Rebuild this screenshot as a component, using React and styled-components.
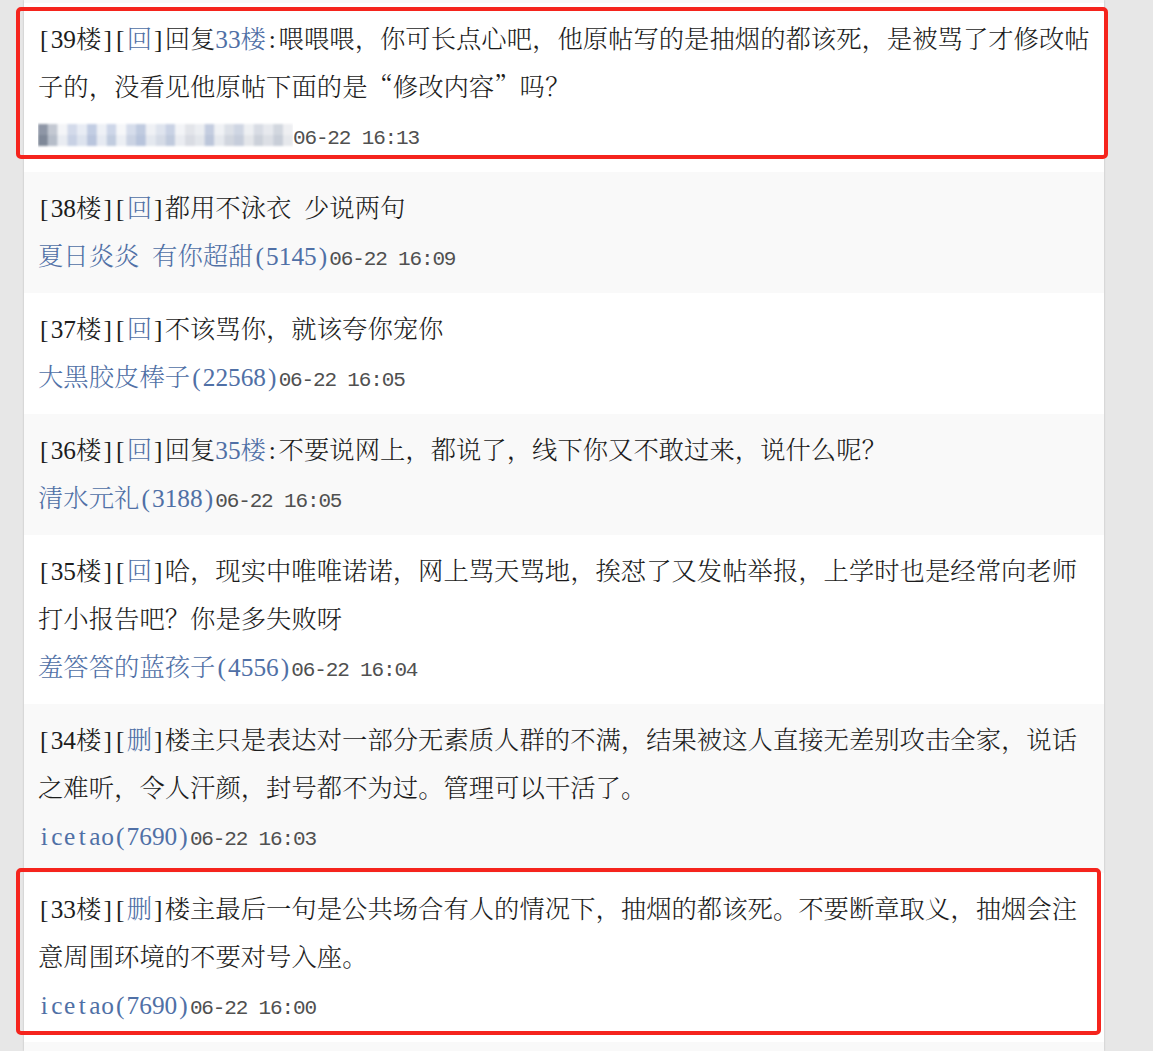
import React from "react";
import styled, { createGlobalStyle } from "styled-components";

const GlobalStyle = createGlobalStyle`
  html, body {
    margin: 0;
    padding: 0;
    background: #e7e7e7;
  }
  body {
    font-family: "Noto Serif CJK SC", "Noto Sans CJK SC", serif;
  }
`;

const Page = styled.div`
  display: flex;
  min-height: 1051px;
`;

const Panel = styled.div`
  margin-left: 24px;
  width: 1080px;
  padding-top: 3px;
  box-sizing: border-box;
  background: #f9f9f9;
  box-shadow: 0 0 2px rgba(0, 0, 0, 0.2);
`;

const Row = styled.div`
  position: relative;
  padding: 10px 8px 15px 14px;
  background: ${(p) => (p.$alt ? "#f9f9f9" : "#ffffff")};
  font-size: 25.33px;
  line-height: 48px;
  color: #1c1c1c;
  font-weight: 300;
`;

const Content = styled.div``;

const Meta = styled.div`
  height: 48px;
  color: #5070a6;
  white-space: nowrap;
`;

const Blue = styled.span`
  color: #5070a6;
`;

// SimSun style half-width cell for latin chars
const Half = styled.span`
  display: inline-block;
  width: 0.5em;
  line-height: 1;
  text-align: center;
  font-family: "Liberation Serif", serif;
  font-weight: 400;
`;

const Time = styled.span`
  font-family: "Liberation Mono", monospace;
  font-size: 21px;
  line-height: 1;
  letter-spacing: -1.15px;
  color: #505050;
`;

const Mosaic = styled.svg`
  display: inline-block;
  vertical-align: middle;
  margin-top: -4px;
`;

const Mark = styled.span`
  position: absolute;
  top: ${(p) => p.$box[0]}px;
  right: ${(p) => p.$box[1]}px;
  bottom: ${(p) => p.$box[2]}px;
  left: ${(p) => p.$box[3]}px;
  border: 4px solid #f5241d;
  border-radius: 5px;
  pointer-events: none;
  z-index: 2;
`;

const txt = (s) =>
  Array.from(s).map((ch, i) =>
    ch.charCodeAt(0) < 128 ? <Half key={i}>{ch}</Half> : ch
  );

const top = [
  "#8e96a6", "#c3c8d2", "#f4f5f8", "#d3daea", "#e8ecf4", "#c2cde3",
  "#eef1f6", "#cdd6e8", "#f6f7f9", "#d6ddeb", "#c0cbe0", "#eff1f5",
  "#dfe4ee", "#c9d2e4", "#f3f4f7", "#e3e5ea", "#eceef2", "#c4cde0",
  "#f0f2f5", "#dde1e8", "#cfd6e3", "#eef0f3", "#d8dce4", "#e7e9ee",
  "#d2d7df", "#eeeff2",
];
const bottom = [
  "#7f8898", "#b6bdc9", "#e9ecf2", "#c8d1e4", "#dde3ee", "#b9c5dd",
  "#e6eaf2", "#c1ccdf", "#eceff4", "#cbd3e3", "#b8c4dc", "#e4e8ef",
  "#d5dbe6", "#c0cadd", "#eaecf1", "#d9dce3", "#e3e6eb", "#bcc6da",
  "#e6e9ee", "#d1d6df", "#c6cddb", "#e4e6ea", "#ccd1da", "#dcdfe5",
  "#c8ced8", "#e6e8ec",
];

const Blurred = () => (
  <Mosaic width="255" height="28" viewBox="0 0 255 28">
    <defs>
      <filter id="soft" x="-5%" y="-20%" width="110%" height="140%">
        <feGaussianBlur stdDeviation="1.3" />
      </filter>
    </defs>
    <g filter="url(#soft)">
      {top.map((c, i) => (
        <rect key={i} x={i * 9.8} y="3" width="10" height="11" fill={c} />
      ))}
      {bottom.map((c, i) => (
        <rect key={"b" + i} x={i * 9.8} y="14" width="10" height="11" fill={c} />
      ))}
    </g>
  </Mosaic>
);

const floors = [
  {
    no: 39,
    tag: "回",
    reply: "33楼",
    text: "喂喂喂，你可长点心吧，他原帖写的是抽烟的都该死，是被骂了才修改帖子的，没看见他原帖下面的是“修改内容”吗？",
    hidden: true,
    time: "06-22 16:13",
    mark: [4, -4, 13, -8],
  },
  {
    no: 38,
    tag: "回",
    text: "都用不泳衣 少说两句",
    user: "夏日炎炎 有你超甜",
    score: "5145",
    time: "06-22 16:09",
  },
  {
    no: 37,
    tag: "回",
    text: "不该骂你，就该夸你宠你",
    user: "大黑胶皮棒子",
    score: "22568",
    time: "06-22 16:05",
  },
  {
    no: 36,
    tag: "回",
    reply: "35楼",
    text: "不要说网上，都说了，线下你又不敢过来，说什么呢？",
    user: "清水元礼",
    score: "3188",
    time: "06-22 16:05",
  },
  {
    no: 35,
    tag: "回",
    text: "哈，现实中唯唯诺诺，网上骂天骂地，挨怼了又发帖举报，上学时也是经常向老师打小报告吧？你是多失败呀",
    user: "羞答答的蓝孩子",
    score: "4556",
    time: "06-22 16:04",
  },
  {
    no: 34,
    tag: "删",
    text: "楼主只是表达对一部分无素质人群的不满，结果被这人直接无差别攻击全家，说话之难听，令人汗颜，封号都不为过。管理可以干活了。",
    user: "icetao",
    score: "7690",
    time: "06-22 16:03",
  },
  {
    no: 33,
    tag: "删",
    text: "楼主最后一句是公共场合有人的情况下，抽烟的都该死。不要断章取义，抽烟会注意周围环境的不要对号入座。",
    user: "icetao",
    score: "7690",
    time: "06-22 16:00",
    mark: [-5, 3, 7, -8],
  },
];

const Floor = ({ f, alt }) => (
  <Row $alt={alt}>
    <Content>
      {txt("[" + f.no)}楼{txt("][")}
      <Blue>{f.tag}</Blue>
      {txt("]")}
      {f.reply && (
        <>
          回复<Blue>{txt(f.reply.replace("楼", ""))}楼</Blue>
          {txt(":")}
        </>
      )}
      {txt(f.text)}
    </Content>
    <Meta>
      {f.hidden ? <Blurred /> : txt(f.user + "(" + f.score + ")")}
      <Time>{f.time}</Time>
    </Meta>
    {f.mark && <Mark $box={f.mark} />}
  </Row>
);

export default function App() {
  return (
    <>
      <GlobalStyle />
      <Page>
        <Panel>
          {floors.map((f, i) => (
            <Floor key={f.no} f={f} alt={i % 2 === 1} />
          ))}
        </Panel>
      </Page>
    </>
  );
}
